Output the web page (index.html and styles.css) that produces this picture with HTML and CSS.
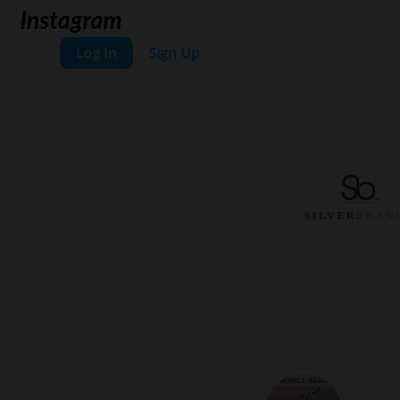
FILE: index.html
```
<!DOCTYPE html>
<html lang="en">
<head>
<meta charset="utf-8">
<meta name="viewport" content="width=device-width, initial-scale=1">
<title>Instagram</title>
<link rel="stylesheet" href="styles.css">
</head>
<body>
<header class="topbar">
  <a class="wordmark" href="#">Instagram</a>
  <nav class="account">
    <button class="login" type="button">Log In</button>
    <a class="signup" href="#">Sign Up</a>
  </nav>
</header>
<main class="profile">
  <div class="avatar">
    <svg class="monogram" viewBox="0 0 40 30" aria-hidden="true">
      <path d="M4 12C0 7 4 2 10 2C15 2 17 5 17 9V17C17 22 20 25 25 25C30 25 33 22 33 17C33 12 30 9 25 9C23 9 21 9 20 11M4 12C8 14 15 13 15 19C15 23 12 25 8 25C4 25 2 22 2 19" fill="none" stroke="#060606" stroke-width="2.6" stroke-linecap="round"/>
      <path d="M3 28.5H33" stroke="#161616" stroke-width="1"/>
      <circle cx="37" cy="25" r="1" fill="#080808"/>
    </svg>
    <span class="brand">SILVER<span class="brand-end">BRAND</span></span>
  </div>
  <a class="highlight" href="#" aria-label="Story highlight">
    <span class="cover">
      <span class="caption">CIRMALL BAKU</span>
      <svg class="photo" viewBox="0 0 77 64" aria-hidden="true">
        <rect width="77" height="64" fill="#161413"/>
        <path d="M0 0H77V3L57 5L50 13L38 8L20 12L0 8Z" fill="#191615"/>
        <path d="M34 16L38 10L43 12L45 7L49 8L55 2" fill="none" stroke="#0d0d0d" stroke-width="2"/>
        <path d="M38 13L41 9M44 11L47 6" stroke="#222" stroke-width="1"/>
      </svg>
    </span>
  </a>
</main>
</body>
</html>
```
FILE: styles.css
```
* {
  box-sizing: border-box;
}

body {
  margin: 0;
  height: 100vh;
  overflow: hidden;
  background: #1f1f1f;
  color: #030303;
  font-family: "Open Sans", "Noto Sans", sans-serif;
  font-size: 14px;
}

a {
  color: inherit;
  text-decoration: none;
}

.topbar {
  height: 60px;
  padding: 4px 20px 0;
  background: #202020;
  border-bottom: 1px solid #1b1b1b;
}

.wordmark {
  display: block;
  width: fit-content;
  height: 33px;
  color: #000;
  font-family: Lato, sans-serif;
  font-size: 24px;
  font-style: italic;
  font-weight: 700;
  line-height: 32px;
}

.account {
  display: flex;
  align-items: center;
  gap: 16px;
  padding-left: 40px;
}

.login {
  height: 32px;
  padding: 0 16px;
  border: 0;
  border-radius: 8px;
  background: #00131f;
  color: #202020;
  font: 600 14px/18px "Open Sans", "Noto Sans", sans-serif;
}

.signup {
  color: #00131f;
  font-weight: 600;
  line-height: 18px;
}

.profile {
  padding: 68px 0 0 260px;
}

.avatar {
  display: flex;
  flex-direction: column;
  align-items: center;
  width: 150px;
  height: 150px;
  margin-left: 26px;
  padding-top: 45px;
  border: 1px solid #1d1d1d;
  border-radius: 50%;
  overflow: hidden;
}

.monogram {
  width: 40px;
  height: 30px;
  flex: none;
}

.brand {
  align-self: flex-start;
  margin-top: 4px;
  padding-left: 17px;
  color: #0b0b0b;
  font-family: "Liberation Serif", serif;
  font-size: 11px;
  font-weight: 700;
  letter-spacing: 2px;
  line-height: 14px;
}

.brand-end {
  color: #151515;
}

.highlight {
  display: block;
  width: 87px;
  height: 87px;
  margin-top: 90px;
  padding: 4px;
  border: 1px solid #1c1c1c;
  border-radius: 50%;
}

.cover {
  display: block;
  width: 77px;
  height: 77px;
  border-radius: 50%;
  background: #1c1c1f;
  overflow: hidden;
}

.caption {
  display: block;
  padding: 4px 4px 0 0;
  color: #0c0a18;
  font-family: "DejaVu Sans Condensed", "Liberation Sans", sans-serif;
  font-size: 7px;
  font-weight: 700;
  line-height: 9px;
  text-align: center;
  white-space: nowrap;
}

.photo {
  display: block;
  width: 77px;
  height: 64px;
}
```
